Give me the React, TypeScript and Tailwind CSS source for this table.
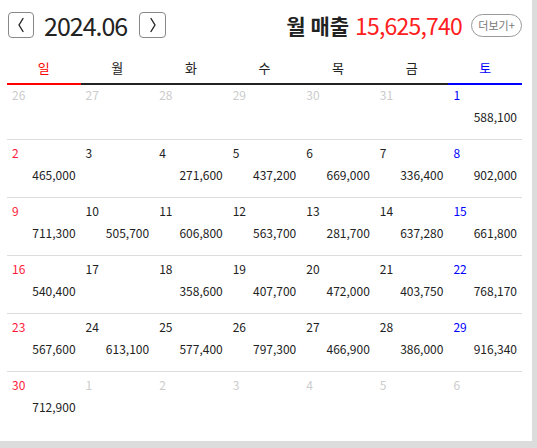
import React from "react";

type Day = { d: number; amt?: string; other?: boolean };

const WEEKDAYS = ["일", "월", "화", "수", "목", "금", "토"];

const WEEKS: Day[][] = [
  [
    { d: 26, other: true },
    { d: 27, other: true },
    { d: 28, other: true },
    { d: 29, other: true },
    { d: 30, other: true },
    { d: 31, other: true },
    { d: 1, amt: "588,100" },
  ],
  [
    { d: 2, amt: "465,000" },
    { d: 3 },
    { d: 4, amt: "271,600" },
    { d: 5, amt: "437,200" },
    { d: 6, amt: "669,000" },
    { d: 7, amt: "336,400" },
    { d: 8, amt: "902,000" },
  ],
  [
    { d: 9, amt: "711,300" },
    { d: 10, amt: "505,700" },
    { d: 11, amt: "606,800" },
    { d: 12, amt: "563,700" },
    { d: 13, amt: "281,700" },
    { d: 14, amt: "637,280" },
    { d: 15, amt: "661,800" },
  ],
  [
    { d: 16, amt: "540,400" },
    { d: 17 },
    { d: 18, amt: "358,600" },
    { d: 19, amt: "407,700" },
    { d: 20, amt: "472,000" },
    { d: 21, amt: "403,750" },
    { d: 22, amt: "768,170" },
  ],
  [
    { d: 23, amt: "567,600" },
    { d: 24, amt: "613,100" },
    { d: 25, amt: "577,400" },
    { d: 26, amt: "797,300" },
    { d: 27, amt: "466,900" },
    { d: 28, amt: "386,000" },
    { d: 29, amt: "916,340" },
  ],
  [
    { d: 30, amt: "712,900" },
    { d: 1, other: true },
    { d: 2, other: true },
    { d: 3, other: true },
    { d: 4, other: true },
    { d: 5, other: true },
    { d: 6, other: true },
  ],
];

function Chevron({ dir }: { dir: "left" | "right" }) {
  return (
    <svg width="8" height="16" viewBox="0 0 8 16" fill="none">
      <path
        d={dir === "left" ? "M6 1.5 L2 8 L6 14.5" : "M2 1.5 L6 8 L2 14.5"}
        stroke="#222"
        strokeWidth="1.4"
        strokeLinecap="round"
        strokeLinejoin="round"
      />
    </svg>
  );
}

function dateColor(col: number, other?: boolean) {
  if (other) return "text-[#cccccc]";
  if (col === 0) return "text-[#ff1a3c]";
  if (col === 6) return "text-[#0000ff]";
  return "text-[#222222]";
}

export default function App() {
  return (
    <div
      className="w-[537px] h-[448px] bg-[#dcdcdc]"
      style={{ fontFamily: '"Noto Sans CJK KR", "Noto Sans", sans-serif' }}
    >
      <div className="w-[532px] h-[441px] bg-white pl-[7px] pr-[10px]">
        {/* Header */}
        <div className="flex items-center justify-between pt-[12px] pl-[1px]">
          <div className="flex items-center">
            <button className="w-[26px] h-[26px] rounded-[4px] border border-[#888] flex items-center justify-center">
              <Chevron dir="left" />
            </button>
            <span className="ml-[10px] mr-[12px] text-[25px] leading-[26px] text-[#222] tracking-[-1px]">
              2024.06
            </span>
            <button className="w-[27px] h-[26px] rounded-[4px] border border-[#888] flex items-center justify-center">
              <Chevron dir="right" />
            </button>
          </div>
          <div className="flex items-center">
            <span className="text-[21px] font-bold text-[#222] leading-[26px]">
              월 매출
            </span>
            <span className="ml-[6px] text-[23px] text-[#ff2020] leading-[26px] tracking-[-0.8px]">
              15,625,740
            </span>
            <button className="ml-[9px] h-[23px] w-[51px] rounded-full border border-[#999] text-[11px] text-[#777] leading-none">
              더보기+
            </button>
          </div>
        </div>

        {/* Weekday header */}
        <div className="grid grid-cols-7 mt-[22px]">
          {WEEKDAYS.map((w, i) => (
            <div
              key={w}
              className={`h-[25px] flex items-start justify-center text-[13px] leading-[16px] border-b-2 ${
                i === 0
                  ? "text-[#ff0000] border-[#ff0000]"
                  : i === 6
                    ? "text-[#0000ff] border-[#0000ff]"
                    : "text-[#222] border-[#222]"
              }`}
            >
              {w}
            </div>
          ))}
        </div>

        {/* Weeks */}
        {WEEKS.map((week, wi) => (
          <div
            key={wi}
            className={`grid grid-cols-7 ${
              wi === 0 ? "h-[55px] pt-[2px]" : "h-[58px] pt-[5px]"
            } ${wi < WEEKS.length - 1 ? "border-b border-[#dddddd]" : ""}`}
          >
            {week.map((day, ci) => (
              <div key={ci} className="flex flex-col px-[5px]">
                <span
                  className={`text-[12px] leading-[16px] ${dateColor(ci, day.other)}`}
                >
                  {day.d}
                </span>
                {day.amt && (
                  <span className="mt-[6px] text-right text-[12px] leading-[16px] text-[#222]">
                    {day.amt}
                  </span>
                )}
              </div>
            ))}
          </div>
        ))}
      </div>
    </div>
  );
}
